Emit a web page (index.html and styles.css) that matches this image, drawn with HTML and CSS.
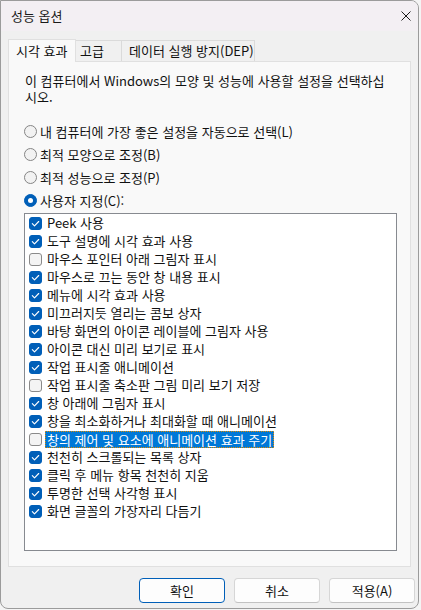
FILE: index.html
```html
<!DOCTYPE html>
<html lang="ko">
<head>
<meta charset="utf-8">
<title>성능 옵션</title>
<link rel="stylesheet" href="styles.css">
</head>
<body>
<div class="window">
  <div class="titlebar">
    <span class="title">성능 옵션</span>
    <svg class="close" width="10" height="10" viewBox="0 0 10 10"><path d="M0.5 0.5L9.5 9.5M9.5 0.5L0.5 9.5" stroke="#1b1b1b" stroke-width="1" fill="none"/></svg>
  </div>
  <div class="body">
    <div class="tabs">
      <div class="tab active t1">시각 효과</div>
      <div class="tab t2">고급</div>
      <div class="tab t3">데이터 실행 방지(DEP)</div>
    </div>
    <div class="panel">
      <p class="desc">이 컴퓨터에서 Windows의 모양 및 성능에 사용할 설정을 선택하십시오.</p>
      <div class="radios">
        <div class="radio"><span class="rb"></span><span>내 컴퓨터에 가장 좋은 설정을 자동으로 선택(L)</span></div>
        <div class="radio"><span class="rb"></span><span>최적 모양으로 조정(B)</span></div>
        <div class="radio"><span class="rb"></span><span>최적 성능으로 조정(P)</span></div>
        <div class="radio"><span class="rb on"></span><span>사용자 지정(C):</span></div>
      </div>
      <div class="list">
        <div class="item"><span class="cb on"><svg viewBox="0 0 13 13"><path d="M3.3 6.7L5.5 8.9L9.7 4.5"/></svg></span><span class="txt">Peek 사용</span></div>
        <div class="item"><span class="cb on"><svg viewBox="0 0 13 13"><path d="M3.3 6.7L5.5 8.9L9.7 4.5"/></svg></span><span class="txt">도구 설명에 시각 효과 사용</span></div>
        <div class="item"><span class="cb"></span><span class="txt">마우스 포인터 아래 그림자 표시</span></div>
        <div class="item"><span class="cb on"><svg viewBox="0 0 13 13"><path d="M3.3 6.7L5.5 8.9L9.7 4.5"/></svg></span><span class="txt">마우스로 끄는 동안 창 내용 표시</span></div>
        <div class="item"><span class="cb on"><svg viewBox="0 0 13 13"><path d="M3.3 6.7L5.5 8.9L9.7 4.5"/></svg></span><span class="txt">메뉴에 시각 효과 사용</span></div>
        <div class="item"><span class="cb on"><svg viewBox="0 0 13 13"><path d="M3.3 6.7L5.5 8.9L9.7 4.5"/></svg></span><span class="txt">미끄러지듯 열리는 콤보 상자</span></div>
        <div class="item"><span class="cb on"><svg viewBox="0 0 13 13"><path d="M3.3 6.7L5.5 8.9L9.7 4.5"/></svg></span><span class="txt">바탕 화면의 아이콘 레이블에 그림자 사용</span></div>
        <div class="item"><span class="cb on"><svg viewBox="0 0 13 13"><path d="M3.3 6.7L5.5 8.9L9.7 4.5"/></svg></span><span class="txt">아이콘 대신 미리 보기로 표시</span></div>
        <div class="item"><span class="cb on"><svg viewBox="0 0 13 13"><path d="M3.3 6.7L5.5 8.9L9.7 4.5"/></svg></span><span class="txt">작업 표시줄 애니메이션</span></div>
        <div class="item"><span class="cb"></span><span class="txt">작업 표시줄 축소판 그림 미리 보기 저장</span></div>
        <div class="item"><span class="cb on"><svg viewBox="0 0 13 13"><path d="M3.3 6.7L5.5 8.9L9.7 4.5"/></svg></span><span class="txt">창 아래에 그림자 표시</span></div>
        <div class="item"><span class="cb on"><svg viewBox="0 0 13 13"><path d="M3.3 6.7L5.5 8.9L9.7 4.5"/></svg></span><span class="txt">창을 최소화하거나 최대화할 때 애니메이션</span></div>
        <div class="item"><span class="cb"></span><span class="txt selected">창의 제어 및 요소에 애니메이션 효과 주기</span></div>
        <div class="item"><span class="cb on"><svg viewBox="0 0 13 13"><path d="M3.3 6.7L5.5 8.9L9.7 4.5"/></svg></span><span class="txt">천천히 스크롤되는 목록 상자</span></div>
        <div class="item"><span class="cb on"><svg viewBox="0 0 13 13"><path d="M3.3 6.7L5.5 8.9L9.7 4.5"/></svg></span><span class="txt">클릭 후 메뉴 항목 천천히 지움</span></div>
        <div class="item"><span class="cb on"><svg viewBox="0 0 13 13"><path d="M3.3 6.7L5.5 8.9L9.7 4.5"/></svg></span><span class="txt">투명한 선택 사각형 표시</span></div>
        <div class="item"><span class="cb on"><svg viewBox="0 0 13 13"><path d="M3.3 6.7L5.5 8.9L9.7 4.5"/></svg></span><span class="txt">화면 글꼴의 가장자리 다듬기</span></div>
      </div>
    </div>
    <div class="buttons">
      <button class="btn default">확인</button>
      <button class="btn">취소</button>
      <button class="btn">적용(A)</button>
    </div>
  </div>
</div>
</body>
</html>
```

FILE: styles.css
```css
* { box-sizing: border-box; }

html, body {
  margin: 0;
  padding: 0;
  background: #f4f4f4;
}

body {
  font-family: "Noto Sans CJK KR", "Noto Sans", sans-serif;
  font-size: 13px;
  color: #111;
  width: 421px;
  height: 610px;
  overflow: hidden;
}

.window {
  width: 419px;
  height: 609px;
  border: 1px solid #9b9b9b;
  border-radius: 0 8px 8px 8px;
  background: #f0f0f0;
  overflow: hidden;
  display: flex;
  flex-direction: column;
}

.titlebar {
  height: 30px;
  flex: none;
  background: #f3eff3;
  display: flex;
  align-items: center;
  justify-content: space-between;
  padding: 0 7px 0 10px;
}

.title {
  line-height: 16px;
  color: #1a1a1a;
}

.close {
  display: block;
}

.body {
  flex: 1;
  padding: 8px 3px 0 7px;
  display: flex;
  flex-direction: column;
}

.tabs {
  display: flex;
  align-items: flex-end;
  height: 22px;
  position: relative;
  z-index: 1;
}

.tab {
  height: 21px;
  border: 1px solid #dadada;
  border-bottom: none;
  background: #f0f0f0;
  line-height: 19px;
  white-space: nowrap;
  color: #111;
}

.tab.active {
  height: 23px;
  margin-bottom: -1px;
  background: #f9f9f9;
  border-color: #e0e0e0;
  line-height: 22px;
}

.t1 { width: 68px; padding-left: 7px; }
.t2 { width: 46px; padding-left: 4px; border-left: none; }
.t3 { width: 133px; padding-left: 7px; border-left: none; }

.panel {
  width: 403px;
  height: 506px;
  border: 1px solid #e0e0e0;
  background: #f9f9f9;
  padding: 11px 10px 0 15px;
}

.desc {
  margin: 0 0 0 1px;
  width: 366px;
  line-height: 16px;
  color: #111;
}

.radios {
  margin-top: 15px;
  display: flex;
  flex-direction: column;
}

.radio {
  height: 23px;
  display: flex;
  align-items: center;
  gap: 3px;
  white-space: nowrap;
  line-height: 16px;
}

.rb {
  width: 13px;
  height: 13px;
  border-radius: 50%;
  border: 1px solid #858585;
  background: #f2f2f2;
  flex: none;
  display: flex;
  align-items: center;
  justify-content: center;
}

.rb.on {
  border-color: #005fb8;
  background: #005fb8;
}

.rb.on::after {
  content: "";
  width: 5px;
  height: 5px;
  border-radius: 50%;
  background: #fff;
}

.list {
  margin-top: 1px;
  width: 373px;
  height: 338px;
  border: 1px solid #878a90;
  background: #fff;
  padding: 0 0 0 4px;
}

.item {
  height: 18px;
  display: flex;
  align-items: center;
  gap: 3px;
  white-space: nowrap;
}

.cb {
  width: 13px;
  height: 13px;
  border-radius: 3px;
  border: 1px solid #8a8a8a;
  background: #f4f4f4;
  flex: none;
  display: flex;
  align-items: center;
  justify-content: center;
}

.cb.on {
  border-color: #005fb8;
  background: #005fb8;
}

.cb svg {
  width: 13px;
  height: 13px;
  flex: none;
  fill: none;
  stroke: #fff;
  stroke-width: 1.1;
  stroke-linecap: round;
  stroke-linejoin: round;
}

.txt {
  line-height: 16px;
  padding: 0 2px;
  color: #111;
}

.txt.selected {
  background: #0078d7;
  color: #fff;
  outline: 1px dotted #e08a00;
  outline-offset: -1px;
  line-height: 17px;
}

.buttons {
  display: flex;
  justify-content: flex-end;
  gap: 9px;
  margin-top: 11px;
}

.btn {
  width: 86px;
  height: 25px;
  font-family: inherit;
  font-size: 13px;
  color: #111;
  background: #fdfdfd;
  border: 1px solid #d6d6d6;
  border-bottom-color: #c2c2c2;
  border-radius: 4px;
  padding: 0;
  line-height: 16px;
}

.btn.default {
  border: 1px solid #005fb8;
}
```
